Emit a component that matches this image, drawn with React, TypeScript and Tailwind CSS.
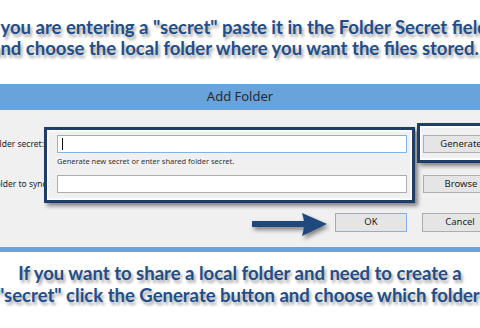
import React from "react";

const heading = "font-['Lato',sans-serif] font-bold text-[18.5px] text-[#1f4e8a] whitespace-nowrap [text-shadow:2px_3px_3px_rgba(0,0,0,0.35)]";
const ui = "font-['Noto_Sans',sans-serif]";

export default function App() {
  return (
    <div className="relative w-[480px] h-[328px] overflow-hidden bg-white">
      {/* top caption */}
      <div className="h-[84px] pt-[17px] leading-[21px]">
        <div className={`${heading} -ml-[15px]`}>If you are entering a "secret" paste it in the Folder Secret field.</div>
        <div className={`${heading} -ml-[9px]`}>and choose the local folder where you want the files stored.</div>
      </div>

      {/* dialog */}
      <div className={`${ui} w-[480px]`}>
        <div className="h-[26px] bg-[#69a3dc] flex items-center justify-center text-[13px] text-[#2b2b2b]">
          Add Folder
        </div>
        <div className="h-[137px] bg-[#f0f0f0] pt-[25px] text-[9.5px] text-[#1e1e1e]">
          <div className="flex items-center h-[18px]">
            <div className="w-[57px] shrink-0 overflow-hidden whitespace-nowrap text-[8.5px]">
              <span className="-ml-[10px] inline-block">Folder secret:</span>
            </div>
            <div className="w-[350px] shrink-0 h-[18px] bg-white border border-[#7eb4ea] flex items-center pl-[4px]">
              <div className="w-px h-[12px] bg-black" />
            </div>
            <div className="ml-[16px] w-[76px] h-[18px] shrink-0 bg-[#e5e5e5] border border-[#adadad] flex items-center justify-center">
              Generate
            </div>
          </div>
          <div className="pl-[57px] mt-[3px] text-[7.5px] leading-[10px] text-[#333]">
            Generate new secret or enter shared folder secret.
          </div>
          <div className="flex items-center h-[18px] mt-[9px]">
            <div className="w-[57px] shrink-0 overflow-hidden whitespace-nowrap text-[8.5px]">
              <span className="-ml-[9px] inline-block">Folder to sync:</span>
            </div>
            <div className="w-[350px] shrink-0 h-[18px] bg-white border border-[#abadb3]" />
            <div className="ml-[16px] w-[76px] h-[18px] shrink-0 bg-[#e5e5e5] border border-[#adadad] flex items-center justify-center">
              Browse
            </div>
          </div>
          <div className="flex items-center h-[19px] mt-[20px] pl-[335px]">
            <div className="w-[72px] h-[19px] shrink-0 bg-[#e5e5e5] border border-[#7eb4ea] flex items-center justify-center">
              OK
            </div>
            <div className="ml-[15px] w-[76px] h-[19px] shrink-0 bg-[#e5e5e5] border border-[#adadad] flex items-center justify-center">
              Cancel
            </div>
          </div>
        </div>
        <div className="h-[5px] bg-[#69a3dc]" />
      </div>

      {/* bottom caption */}
      <div className="pt-[10px] leading-[22px]">
        <div className={`${heading} flex justify-center`}>If you want to share a local folder and need to create a</div>
        <div className={`${heading} -ml-[3px]`}>"secret" click the Generate button and choose which folder</div>
      </div>

      {/* highlight boxes */}
      <div className="absolute left-[44px] top-[127px] w-[371px] h-[76px] border-[3px] border-[#1f3d6b] shadow-[inset_0_0_0_1.5px_#ffffff,3px_3px_4px_rgba(0,0,0,0.45)]" />
      <div className="absolute left-[417px] top-[123px] w-[90px] h-[40px] border-[3px] border-[#1f3d6b] shadow-[inset_0_0_0_1.5px_#ffffff,3px_3px_4px_rgba(0,0,0,0.45)]" />

      {/* arrow */}
      <svg className="absolute left-[250px] top-[210px] [filter:drop-shadow(2px_3px_2px_rgba(0,0,0,0.45))]" width="80" height="30" viewBox="0 0 80 30">
        <rect x="2" y="11" width="52" height="6" fill="#1f497d" />
        <path d="M52 3 Q56 14 52 26 L77 14 Z" fill="#1f497d" />
      </svg>
    </div>
  );
}
